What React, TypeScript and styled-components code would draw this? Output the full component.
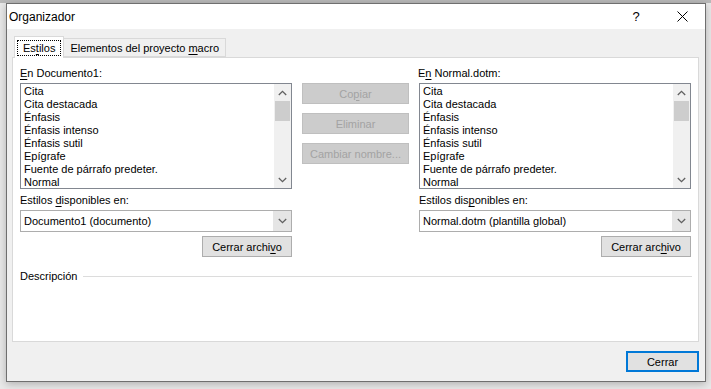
import React from 'react';
import styled, { createGlobalStyle } from 'styled-components';

const GlobalStyle = createGlobalStyle`
  html, body {
    margin: 0;
    padding: 0;
    background: #e9e9e9;
    font-family: "Liberation Sans", Arial, sans-serif;
  }
`;

const Desktop = styled.div`
  width: 711px;
  height: 389px;
  overflow: hidden;
  background: linear-gradient(to bottom, #b9b9b9 0, #b9b9b9 3px, #e9e9e9 3px);
  padding: 3px 0 0 6px;
  box-sizing: border-box;
`;

const Window = styled.div`
  width: 700px;
  height: 379px;
  box-sizing: border-box;
  border: 1px solid #6f6f6f;
  background: #f0f0f0;
  display: flex;
  flex-direction: column;
  box-shadow: 0 2px 8px rgba(0, 0, 0, 0.25);
`;

const TitleBar = styled.div`
  height: 25px;
  background: #ffffff;
  display: flex;
  align-items: center;
  flex-shrink: 0;
`;

const Title = styled.div`
  flex: 1;
  padding-left: 2px;
  font-size: 12px;
  color: #000;
`;

const TitleButton = styled.div`
  width: 46px;
  height: 25px;
  display: flex;
  align-items: center;
  justify-content: center;
  font-size: 13px;
  color: #000;
`;

const Body = styled.div`
  flex: 1;
  display: flex;
  flex-direction: column;
  padding: 7px 6px 9px 5px;
  font-size: 11px;
`;

const TabStrip = styled.div`
  display: flex;
  align-items: flex-end;
  height: 21px;
  padding-left: 2px;
  position: relative;
  z-index: 1;
`;

const Tab = styled.div<{ $active?: boolean }>`
  box-sizing: border-box;
  height: ${(p) => (p.$active ? '22px' : '19px')};
  margin-bottom: ${(p) => (p.$active ? '-1px' : '0')};
  padding: ${(p) => (p.$active ? '0 2px' : '0 6px')};
  border: 1px solid #d9d9d9;
  border-bottom: ${(p) => (p.$active ? 'none' : '1px solid #d9d9d9')};
  background: ${(p) => (p.$active ? '#ffffff' : '#f0f0f0')};
  display: flex;
  align-items: center;
  color: #000;
  white-space: pre;
  & + & {
    border-left: none;
  }
`;

const FocusRect = styled.span`
  border: 1px dotted #000;
  padding: 0 5px;
  line-height: 14px;
`;

const Panel = styled.div`
  height: 285px;
  box-sizing: border-box;
  background: #ffffff;
  border: 1px solid #d9d9d9;
  padding: 7px 6px 0 7px;
  display: flex;
  flex-direction: column;
`;

const Columns = styled.div`
  display: grid;
  grid-template-columns: 272px 107px 272px;
  column-gap: 10px;
`;

const Side = styled.div`
  display: flex;
  flex-direction: column;
`;

const Label = styled.div<{ $shift?: number; $top?: number }>`
  line-height: 16px;
  color: #000;
  margin-left: ${(p) => p.$shift ?? 0}px;
  margin-top: ${(p) => p.$top ?? 0}px;
`;

const Key = styled.span`
  text-decoration: underline;
  text-underline-offset: 2px;
`;

const ListBox = styled.div`
  margin-top: 2px;
  height: 106px;
  box-sizing: border-box;
  border: 1px solid #828790;
  display: flex;
`;

const Items = styled.div`
  flex: 1;
  padding: 1px 0 0 3px;
  overflow: hidden;
`;

const Item = styled.div`
  font-size: 11px;
  line-height: 13px;
  color: #000;
  white-space: nowrap;
`;

const ScrollBar = styled.div`
  width: 17px;
  background: #f0f0f0;
  display: flex;
  flex-direction: column;
  align-items: center;
`;

const ScrollArrow = styled.div`
  height: 17px;
  width: 17px;
  display: flex;
  align-items: center;
  justify-content: center;
`;

const Thumb = styled.div`
  width: 15px;
  height: 20px;
  background: #cdcdcd;
`;

const Track = styled.div`
  flex: 1;
`;

const Select = styled.div`
  margin-top: 2px;
  height: 22px;
  box-sizing: border-box;
  border: 1px solid #adadad;
  background: #ffffff;
  display: flex;
  align-items: stretch;
`;

const SelectValue = styled.div`
  flex: 1;
  padding-left: 3px;
  display: flex;
  align-items: center;
`;

const SelectButton = styled.div`
  width: 17px;
  background: #e5e5e5;
  border-left: 1px solid #e5e5e5;
  display: flex;
  align-items: center;
  justify-content: center;
`;

const Button = styled.div<{ $disabled?: boolean; $default?: boolean; $width?: number }>`
  box-sizing: border-box;
  width: ${(p) => (p.$width ? `${p.$width}px` : '100%')};
  height: 21px;
  display: flex;
  align-items: center;
  justify-content: center;
  white-space: pre;
  color: ${(p) => (p.$disabled ? '#a3a3a3' : '#000')};
  background: ${(p) => (p.$disabled ? '#cccccc' : '#e1e1e1')};
  border: ${(p) =>
    p.$default ? '2px solid #0078d7' : p.$disabled ? '1px solid #bfbfbf' : '1px solid #adadad'};
`;

const RightAligned = styled.div`
  display: flex;
  justify-content: flex-end;
  margin-top: 4px;
`;

const Middle = styled.div`
  display: flex;
  flex-direction: column;
  gap: 9px;
  padding-top: 18px;
`;

const DescRow = styled.div`
  margin-top: 11px;
  display: flex;
  align-items: center;
  gap: 6px;
  line-height: 16px;
`;

const Rule = styled.div`
  flex: 1;
  height: 1px;
  background: #dcdcdc;
`;

const Footer = styled.div`
  margin-top: 9px;
  display: flex;
  justify-content: flex-end;
`;

const Chevron = ({ up }: { up?: boolean }) => (
  <svg width="9" height="6" viewBox="0 0 9 6">
    <path
      d={up ? 'M0.8 5 L4.5 1.3 L8.2 5' : 'M0.8 1 L4.5 4.7 L8.2 1'}
      fill="none"
      stroke="#606060"
      strokeWidth="1.3"
    />
  </svg>
);

const styles = [
  'Cita',
  'Cita destacada',
  'Énfasis',
  'Énfasis intenso',
  'Énfasis sutil',
  'Epígrafe',
  'Fuente de párrafo predeter.',
  'Normal',
];

const StyleList = () => (
  <ListBox>
    <Items>
      {styles.map((s) => (
        <Item key={s}>{s}</Item>
      ))}
    </Items>
    <ScrollBar>
      <ScrollArrow>
        <Chevron up />
      </ScrollArrow>
      <Thumb />
      <Track />
      <ScrollArrow>
        <Chevron />
      </ScrollArrow>
    </ScrollBar>
  </ListBox>
);

const App: React.FC = () => {
  return (
    <Desktop>
      <GlobalStyle />
      <Window>
        <TitleBar>
          <Title>Organizador</Title>
          <TitleButton>?</TitleButton>
          <TitleButton>
            <svg width="11" height="11" viewBox="0 0 11 11">
              <path d="M0.5 0.5 L10.5 10.5 M10.5 0.5 L0.5 10.5" stroke="#000" strokeWidth="1" />
            </svg>
          </TitleButton>
        </TitleBar>
        <Body>
          <TabStrip>
            <Tab $active>
              <FocusRect>
                Es<Key>t</Key>ilos
              </FocusRect>
            </Tab>
            <Tab>
              <span>
                Elementos del proyecto <Key>m</Key>acro
              </span>
            </Tab>
          </TabStrip>
          <Panel>
            <Columns>
              <Side>
                <Label>
                  <Key>E</Key>n Documento1:
                </Label>
                <StyleList />
                <Label $top={3}>
                  Estilos <Key>d</Key>isponibles en:
                </Label>
                <Select>
                  <SelectValue>Documento1 (documento)</SelectValue>
                  <SelectButton>
                    <Chevron />
                  </SelectButton>
                </Select>
                <RightAligned>
                  <Button $width={90}>
                    <span>
                      Cerrar archi<Key>v</Key>o
                    </span>
                  </Button>
                </RightAligned>
              </Side>
              <Middle>
                <Button $disabled>
                  <span>
                    Co<Key>p</Key>iar
                  </span>
                </Button>
                <Button $disabled>Eliminar</Button>
                <Button $disabled>Cambiar nombre...</Button>
              </Middle>
              <Side>
                <Label $shift={-1}>
                  E<Key>n</Key> Normal.dotm:
                </Label>
                <StyleList />
                <Label $top={3}>
                  Estilos dis<Key>p</Key>onibles en:
                </Label>
                <Select>
                  <SelectValue>Normal.dotm (plantilla global)</SelectValue>
                  <SelectButton>
                    <Chevron />
                  </SelectButton>
                </Select>
                <RightAligned>
                  <Button $width={90}>
                    <span>
                      Cerrar arc<Key>h</Key>ivo
                    </span>
                  </Button>
                </RightAligned>
              </Side>
            </Columns>
            <DescRow>
              Descripción
              <Rule />
            </DescRow>
          </Panel>
          <Footer>
            <Button $default $width={73}>
              Cerrar
            </Button>
          </Footer>
        </Body>
      </Window>
    </Desktop>
  );
};

export default App;
